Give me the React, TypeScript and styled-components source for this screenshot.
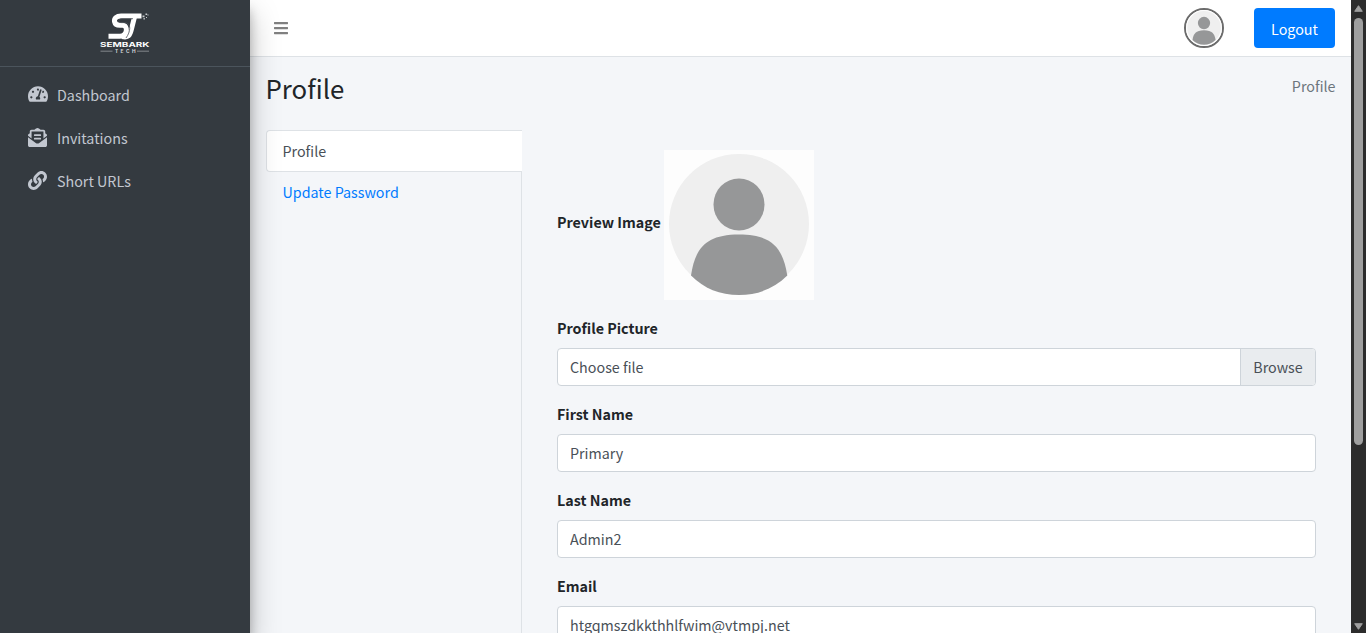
import React from "react";
import styled, { createGlobalStyle } from "styled-components";
import { FaBars, FaEnvelopeOpenText, FaLink, FaTachometerAlt } from "react-icons/fa";

const GlobalStyle = createGlobalStyle`
  *, *::before, *::after { box-sizing: border-box; }
  body {
    margin: 0;
    overflow: hidden;
    background: #f4f6f9;
    color: #212529;
    font-family: "Noto Sans CJK SC", "Open Sans", sans-serif;
    font-size: 14.3px;
    line-height: 24px;
  }
`;

const Shell = styled.div`
  display: flex;
  height: 100vh;
  overflow: hidden;
`;

const Sidebar = styled.aside`
  position: relative;
  z-index: 2;
  flex: 0 0 250px;
  background: #343a40;
  color: #c2c7d0;
  box-shadow: 0 14px 28px rgba(0, 0, 0, 0.25), 0 10px 10px rgba(0, 0, 0, 0.22);
`;

const Brand = styled.a`
  display: flex;
  justify-content: center;
  height: 67px;
  padding-top: 10px;
  border-bottom: 1px solid #4b545c;
`;

const SideNav = styled.nav`
  display: flex;
  flex-direction: column;
  gap: 3px;
  padding: 8px 8px 0;
`;

const SideLink = styled.a`
  display: flex;
  align-items: center;
  height: 40px;
  padding: 0 16px;
  gap: 6px;
`;

const SideIcon = styled.span<{ $size: number }>`
  display: flex;
  justify-content: center;
  width: 27px;
  margin-top: -2px;
  font-size: ${(p) => p.$size}px;
`;

const Main = styled.div`
  flex: 1;
  min-width: 0;
  display: flex;
  flex-direction: column;
`;

const Topbar = styled.header`
  display: flex;
  align-items: center;
  flex: 0 0 57px;
  padding: 0 16px 0 23px;
  background: #fff;
  border-bottom: 1px solid #dee2e6;
`;

const MenuButton = styled.a`
  display: flex;
  margin-right: auto;
  color: #808080;
  font-size: 16px;
`;

const AvatarRing = styled.span`
  display: flex;
  width: 40px;
  height: 40px;
  margin-right: 30px;
  border: 2px solid #6b6b6b;
  border-radius: 50%;
  overflow: hidden;
`;

const LogoutButton = styled.button`
  width: 81px;
  height: 40px;
  padding: 2px 0 0;
  border: 0;
  border-radius: 4px;
  background: #007bff;
  color: #fff;
  font: inherit;
`;

const PageHead = styled.div`
  display: flex;
  justify-content: space-between;
  flex: 0 0 73px;
  padding: 13px 15.5px 0 15.5px;
`;

const Title = styled.h1`
  margin: 0;
  font-size: 25.8px;
  font-weight: 400;
  line-height: 35px;
`;

const Crumb = styled.span`
  color: #6c757d;
  line-height: 32px;
`;

const Content = styled.div`
  flex: 1;
  min-height: 0;
  display: flex;
  padding: 0 35px 0 16px;
`;

const Tabs = styled.nav`
  flex: 0 0 256px;
  margin-right: 35px;
  border-right: 1px solid #dee2e6;
`;

const Tab = styled.a<{ $active?: boolean }>`
  display: block;
  height: ${(p) => (p.$active ? 42 : 40)}px;
  padding: ${(p) => (p.$active ? "8px 15.5px" : "8px 16.5px")};
  ${(p) =>
    p.$active
      ? `margin-right: -1px;
  border: 1px solid #dee2e6;
  border-right: 0;
  border-radius: 4px 0 0 4px;
  background: #fff;
  color: #495057;`
      : "color: #007bff;"}
`;

const Form = styled.form`
  flex: 1;
  display: flex;
  flex-direction: column;
  gap: 16px;
  padding-top: 20px;
`;

const PreviewRow = styled.div`
  display: flex;
  align-items: center;
  height: 150px;
`;

const Label = styled.label`
  display: block;
  font-weight: 700;
`;

const PreviewLabel = styled(Label)`
  width: 107px;
  padding-bottom: 6px;
`;

const Field = styled.div`
  display: flex;
  flex-direction: column;
  gap: 8px;
  height: 70px;
`;

const Input = styled.input`
  width: 100%;
  height: 38px;
  padding: 0 12px 2px;
  border: 1px solid #ced4da;
  border-radius: 4px;
  background: #fff;
  color: #495057;
  font: inherit;
`;

const FilePicker = styled.div`
  display: flex;
  height: 38px;
  border: 1px solid #ced4da;
  border-radius: 4px;
  background: #fff;
  color: #495057;
  line-height: 35px;
  overflow: hidden;
`;

const FileName = styled.span`
  flex: 1;
  padding: 0 12px;
`;

const Browse = styled.span`
  width: 75px;
  border-left: 1px solid #ced4da;
  background: #e9ecef;
  text-align: center;
`;

const Scrollbar = styled.div`
  display: flex;
  flex-direction: column;
  align-items: center;
  flex: 0 0 15px;
  padding: 5px 0 3px;
  background: #2c2c2c;
`;

const Thumb = styled.div`
  width: 9px;
  height: 427px;
  margin: 6px 0 auto;
  border-radius: 5px;
  background: #9f9f9f;
`;

const Arrow = ({ down }: { down?: boolean }) => (
  <svg width="9" height="7" viewBox="0 0 9 7" fill="#9f9f9f" stroke="#9f9f9f" strokeLinejoin="round">
    <path d={down ? "M.7.7h7.6L4.5 6.3z" : "M.7 6.3h7.6L4.5.7z"} />
  </svg>
);

const Person = ({ size }: { size: number }) => (
  <svg width={size} height={size} viewBox="0 0 150 150">
    <rect width="150" height="150" fill="#fdfdfd" />
    <circle cx="75" cy="74" r="70" fill="#efefef" />
    <ellipse cx="75" cy="54.5" rx="25.5" ry="26" fill="#969798" />
    <path
      d="M27 125.5C31 99 41 84.500 75 84.500S119 99 123.300 125.500C110 138.500 94 145 75 145S40 138.500 27 125.500z"
      fill="#969798"
    />
  </svg>
);

const BrandText = styled.text`
  font-family: Inter, "Liberation Sans", sans-serif;
  font-weight: 700;
`;

const Logo = () => (
  <svg width="52" height="46" viewBox="0 0 52 46" fill="none">
    <g stroke="#fff" strokeWidth="5">
      <path d="M42.500 5.900H22C17.500 5.900 15 8.500 15.500 11.500C16 14.200 18 15.300 21 15.300H23.500C29.500 15.300 28.500 26.200 21 26.200H9.500" />
      <path d="M35.500 7L32.500 19C31 25.500 29.500 28 23 26.500" />
    </g>
    <path
      d="M34 8.700H23C19.500 8.700 18.500 12.500 22 12.600H25.500C33 12.800 31.500 22 27 28"
      stroke="#4a4f55"
      strokeWidth=".8"
    />
    <path
      d="M43.500 5.500h2v1.800h-2zM46.500 3.500h1.600v1.600h-1.600zM44.500 8h1.300v1.500h-1.300zM48.500 4.500h1v1h-1zM47 7h1v1h-1z"
      fill="#c8cbce"
    />
    <BrandText x="1" y="37.200" fontSize="6.400" fill="#fff" textLength="49.500" lengthAdjust="spacingAndGlyphs">
      SEMBARK
    </BrandText>
    <BrandText x="16" y="42.800" fontSize="4.800" fill="#d4d7da" textLength="20.500">
      TECH
    </BrandText>
    <path d="M1.500 40.700h12v.9h-12zM38 40.700h12v.9H38z" fill="#9da1a5" />
  </svg>
);

const links = [
  { label: "Dashboard", icon: FaTachometerAlt, size: 20 },
  { label: "Invitations", icon: FaEnvelopeOpenText, size: 19 },
  { label: "Short URLs", icon: FaLink, size: 19 },
];

const fields = [
  { label: "First Name", value: "Primary" },
  { label: "Last Name", value: "Admin2" },
  { label: "Email", value: "htgqmszdkkthhlfwim@vtmpj.net" },
];

export default function App() {
  return (
    <>
      <GlobalStyle />
      <Shell>
        <Sidebar>
          <Brand>
            <Logo />
          </Brand>
          <SideNav>
            {links.map(({ label, icon: Icon, size }) => (
              <SideLink key={label}>
                <SideIcon $size={size}>
                  <Icon />
                </SideIcon>
                {label}
              </SideLink>
            ))}
          </SideNav>
        </Sidebar>
        <Main>
          <Topbar>
            <MenuButton>
              <FaBars />
            </MenuButton>
            <AvatarRing>
              <Person size={36} />
            </AvatarRing>
            <LogoutButton>Logout</LogoutButton>
          </Topbar>
          <PageHead>
            <Title>Profile</Title>
            <Crumb>Profile</Crumb>
          </PageHead>
          <Content>
            <Tabs>
              <Tab $active>Profile</Tab>
              <Tab>Update Password</Tab>
            </Tabs>
            <Form>
              <PreviewRow>
                <PreviewLabel>Preview Image</PreviewLabel>
                <Person size={150} />
              </PreviewRow>
              <Field>
                <Label>Profile Picture</Label>
                <FilePicker>
                  <FileName>Choose file</FileName>
                  <Browse>Browse</Browse>
                </FilePicker>
              </Field>
              {fields.map((f) => (
                <Field key={f.label}>
                  <Label>{f.label}</Label>
                  <Input defaultValue={f.value} />
                </Field>
              ))}
            </Form>
          </Content>
        </Main>
        <Scrollbar>
          <Arrow />
          <Thumb />
          <Arrow down />
        </Scrollbar>
      </Shell>
    </>
  );
}
